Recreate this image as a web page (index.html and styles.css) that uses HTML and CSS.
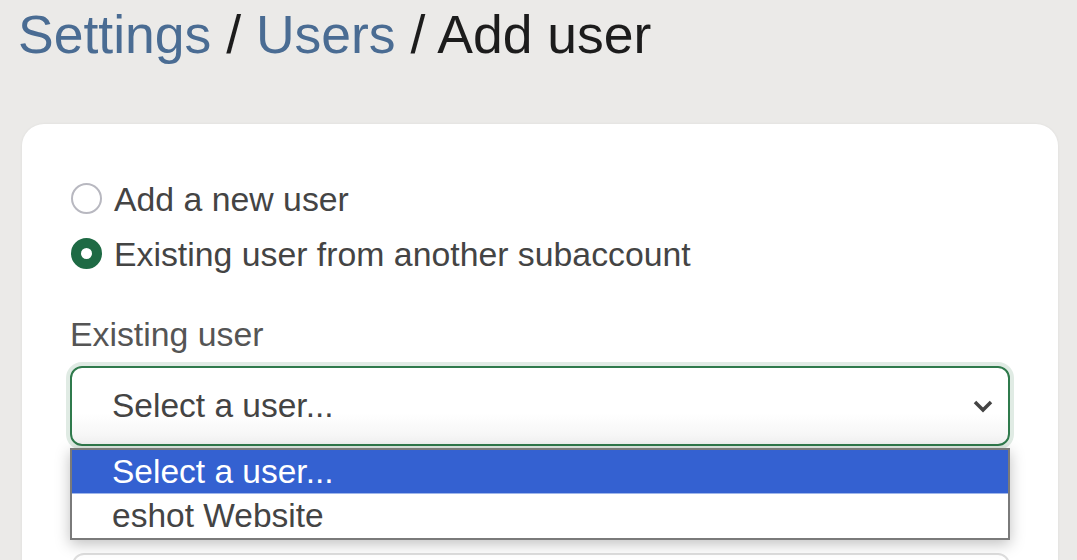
FILE: index.html
```html
<!DOCTYPE html>
<html lang="en">
<head>
	<meta charset="UTF-8">
	<title>Add user</title>
	<link rel="stylesheet" href="styles.css">
</head>
<body>
	<h1 class="crumbs"><a href="#">Settings</a> / <a href="#">Users</a> / <span>Add user</span></h1>
	<div class="card">
		<label class="choice">
			<span class="radio"></span>
			Add a new user
		</label>
		<label class="choice">
			<span class="radio checked"></span>
			Existing user from another subaccount
		</label>

		<div class="field-label">Existing user</div>
		<div class="picker">
			<div class="select">
				<span>Select a user...</span>
				<svg class="chev" width="22" height="14" viewBox="0 0 22 14"><polyline points="3,3 11,11 19,3" fill="none" stroke="#444" stroke-width="3.5"/></svg>
			</div>
			<!-- open list of the select -->
			<ul class="options">
				<li class="on">Select a user...</li>
				<li>eshot Website</li>
			</ul>
		</div>

		<div class="next-field"></div>
	</div>
</body>
</html>
```

FILE: styles.css
```css
*{margin:0;padding:0;box-sizing:border-box;}
body{background-color:#ebeae8;font-family:"Liberation Sans",Arial,sans-serif;overflow:hidden;}

/*标题*/
.crumbs{font-size:53.5px;line-height:1.15;font-weight:normal;color:#1c1c1c;padding:4px 0 0 18px;}
.crumbs a{color:#4a6c93;text-decoration:none;}

.card{background-color:#fff;margin:58px 19px 0 22px;border-radius:22px;padding:56px 48px 0 48px;height:600px;box-shadow:0 0 3px rgba(0,0,0,.06);}

.choice{display:flex;align-items:center;gap:12px;font-size:33.8px;line-height:38px;color:#444;margin-bottom:17px;padding-left:1px;}
.radio{width:31px;height:31px;border-radius:50%;border:2px solid #b8b8c0;background:#fff;flex:none;}
.radio.checked{border:10px solid #1e6a44;}

.field-label{font-size:33.8px;line-height:38px;color:#555;margin-top:42px;}

.picker{position:relative;margin-top:13px;}
.select{height:80px;border:2px solid #2f7a4c;border-radius:12px;box-shadow:0 0 0 4px rgba(47,122,76,.15);background:linear-gradient(180deg,#fff 60%,#f3f3f3);display:flex;align-items:center;justify-content:space-between;padding:0 14px 0 40px;font-size:33.5px;color:#444;}

.options{position:absolute;left:0;right:0;top:82px;list-style:none;background:#fff;border:2px solid #7a7a7a;box-shadow:0 4px 14px rgba(0,0,0,.25);z-index:2;}
.options li{height:44px;line-height:44px;padding-left:40px;font-size:33.5px;color:#444;}
.options li.on{background-color:#3461d1;color:#fff;border-bottom:1px solid #9fb6ea;}

.next-field{margin-top:107px;margin-left:2px;height:80px;border:2px solid #dedede;border-radius:12px;}
```
